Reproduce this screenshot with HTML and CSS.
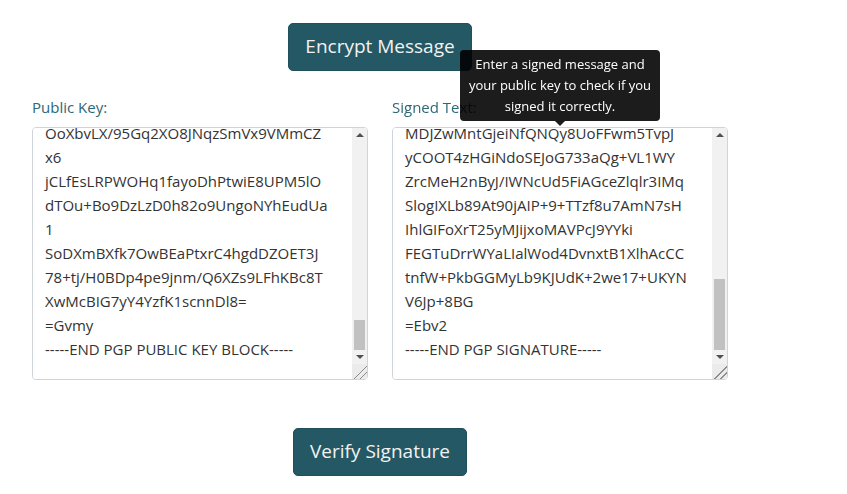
FILE: index.html
```html
<!DOCTYPE html>
<html>
<head>
<meta charset="utf-8">
<link rel="stylesheet" href="styles.css">
</head>
<body>
<div class="page">
  <div class="top-row">
    <button class="btn">Encrypt Message</button>
  </div>
  <div class="fields">
    <div class="field">
      <label class="label">Public Key:</label>
      <div class="box-wrap">
      <textarea class="box" id="pk">-----BEGIN PGP PUBLIC KEY BLOCK-----

mQINBGVq3xkBEADJrV9Lq2c0pHkT1vXn
Rb8wQ5sY3mZtK7aP1gF0xUe6hNw2dCj4
iL9oV3bT8rEyG5qA1uS7fW0nMzHk2Xp
6D4cJ+oRsLaV/91QgTjN8eBi3ZwYmKh5
Pf2UtxCv7EdWlOq0nAy4RbG1sJkM9
zHe3T6oVr8LuQwXj5NpD2aFiKc0gY7B
mS1tWx/4hRvE9lAoJ6nCdPqZ+8kUyGf
3bI5eOrT2wMsHxL0iVaN7jD9uKpQc
1YgF6zBtE4oWmR8nSlXqA2vCh/JdP5k
+Ui3TyGbLwO9eM0rZaHs7QfNxK1jVc
4pD6IuBo2nWgYlE8tRqS5mAzXhC3
kF7vJ9PwTeL1sGdHy0NqOaUr6iMbZc
2xQ+Kn4BtWfYh8lEjR3gVoDmSa5pI
uC9Zw1rTyHe0NkLq7OsXbJ4FdGi6
Mv3PaE8hUcRnW2tY5gQj+oBlKx0s
D9fZ7iTmA1pSrVeN4wLy6HbCqG3u
Xk8JoR2dPn5tEaWz0YhMsFlQc7I
gB3vUyO9rKe1NjT6xLmD4hZiSp
A5wCqH8tG0fRbJ2nXsPo7lVuMy
9eK3dYzQ+aW1iTrL6gNxBh4OcE
Fj0mUpS5vHtD8kRqZ2bIyo7CwX
n4GaL1sJeT9xMhVdP3fKr6QzOu
Wb2Y8gNcE0tHiRlA5pSmUj7kV
3qDoZ1yF+xLwT6nBeGs9aKrC4h
Mu0IjPv8dXc2QtYbR5lEoNfW7z
Hs1gA6kSpZ3wVmTy9rLeJ0DxnB
4iOcF8qUaK2tGhXjP7bMvE5lR
Yd9NoW1sC3zQ+eTgL6uBmIkx
0rHpVa8fJyD4SnE2cO7tGwXq
ZlM5bKi3Ue9AhRvP1jQnTd6s
Fx2oW8gYcL0mBtN4kE7pJuSa
qI3vHr9Z+eDlC5yX1wGfTbO6
Kn0sMa2jPiQ7dVuL4hRcE8gY
oB5tW1zNxF9kAeS3mJrG6lHv
2UdCq0XpT7yIb4sOw8LfZnMj
Rg1aE5cV+hK9tPuQ3iYeD6oB
xW7mN2lSjF0rZ4gTkA8bCnHv
dO3q1UyJ5wLpI9eXsG6tRa0M
Cf8hKzB2mVoE4nYiT7lQxPuD
gS1jW5rA0bN3kZ+eHcF9yLtO
6pMvU2dIqX8sGwJ4aRn1oETl
Bh7zK0fYcQ5mDiP3tVuS9gLx
nA2rW6jO8eHbC1kF4yZsM0qT
Uv5Il3pGd9tXwE7oR+aJhN2c
Kq0fB6mLzY4iS8gDnT1uVxWe
3rPj5CoH9lA7bMsZ2kQtE0yF
Ow6dI1vG4hUnX8cRa3JpL5mT
eK9sYq2B+tNfW0zMj7oDiV4g
Ha1lC6rP3uSxE8bQyZ5nGkT
Jd0wF2mA9vOhR4tLcI7eUsX
gN1pY6kB3qWzM8jDf5oTaHr
Cx0E2lVi9uSbG4nQt7yKeP
+Rm1hJ6dZ3wOcL8sFa5XgUv
YoT2kN0bI7qD4jMr9eHpS
Lw3fA8nGzKc1Vt6RyQm0Ue
Pb5sJ2iX9oDhT4kWg7NlCa
Ev1qM8yZ3uFrB6tHxS0jKd
9cO2wL5gAnI7pRmQe4VzYb
Tf3hU0kD8sJxGa1lN6oWrC
Mi7yB2qE5vZtK9cSgP0dXn
Hj4uR1wL8fAoY6mTeQ3sIb
OoXbvLX/95Gq2XO8JNqzSmVx9VMmCZ
x6
jCLfEsLRPWOHq1fayoDhPtwiE8UPM5lO
dTOu+Bo9DzLzD0h82o9UngoNYhEudUa
1
SoDXmBXfk7OwBEaPtxrC4hgdDZOET3J
78+tj/H0BDp4pe9jnm/Q6XZs9LFhKBc8T
XwMcBIG7yY4YzfK1scnnDl8=
=Gvmy
-----END PGP PUBLIC KEY BLOCK-----</textarea>
        <div class="sb" aria-hidden="true">
          <div class="sb-btn"><span class="arrow-up"></span></div>
          <div class="sb-track"><div class="sb-thumb" style="height: 30px"></div></div>
          <div class="sb-btn"><span class="arrow-down"></span></div>
        </div>
      </div>
    </div>
    <div class="field">
      <label class="label">Signed Text:</label>
      <div class="box-wrap">
      <textarea class="box" id="st">-----BEGIN PGP SIGNED MESSAGE-----
Hash: SHA512

Hello, this is my signed message.
-----BEGIN PGP SIGNATURE-----

iQIzBAEBCgAdFiEEq7mN2lSjF0rZ4gT
kA8bCnHvdO3q1UyJ5wLpI9eXsG6tRa0
MCf8hKzB2mVoE4nYiT7lQxPuDgS1jW5
rA0bN3kZ+eHcF9yLtO6pMvU2dIqX8sG
wJ4aRn1oETlBh7zK0fYcQ5mDiP3tVuS
9gLxnA2rW6jO8eHbC1kF4yZsM0qTUv5
Il3pGd9tXwE7oR+aJhN2cKq0fB6mLzY
4iS8gDnT1uVxWe3rPj5CoH9lA7bMsZ2
kQtE0yFOw6dI1vG4hUnX8cRa3JpL5m
Tf3hU0kD8sJxGa1lN6oWrCMi7yB2qE
5vZtK9cSgP0dXnHj4uR1wL8fAoY6mT
eQ3sIbPb5sJ2iX9oDhT4kWg7NlCaEv
1qM8yZ3uFrB6tHxS0jKd9cO2wL5gAn
MDJZwMntGjeiNfQNQy8UoFFwm5TvpJ
yCOOT4zHGiNdoSEJoG733aQg+VL1WY
ZrcMeH2nByJ/IWNcUd5FiAGceZlqlr3IMq
SlogIXLb89At90jAIP+9+TTzf8u7AmN7sH
IhlGIFoXrT25yMJijxoMAVPcJ9YYki
FEGTuDrrWYaLIalWod4DvnxtB1XlhAcCC
tnfW+PkbGGMyLb9KJUdK+2we17+UKYN
V6Jp+8BG
=Ebv2
-----END PGP SIGNATURE-----</textarea>
        <div class="sb" aria-hidden="true">
          <div class="sb-btn"><span class="arrow-up"></span></div>
          <div class="sb-track"><div class="sb-thumb" style="height: 71px"></div></div>
          <div class="sb-btn"><span class="arrow-down"></span></div>
        </div>
      </div>
      <div class="tooltip">Enter a signed message and your public key to check if you signed it correctly.</div>
    </div>
  </div>
  <div class="bottom-row">
    <button class="btn">Verify Signature</button>
  </div>
</div>
<script src="script.js"></script>
</body>
</html>
```

FILE: styles.css
```css
html, body {
  margin: 0;
  padding: 0;
  background: #ffffff;
}
body {
  font-family: "Open Sans", "Noto Sans", sans-serif;
  color: #333333;
}
.page {
  width: 696px;
  margin-left: 32px;
  padding-top: 23px;
}
.top-row, .bottom-row {
  display: flex;
  justify-content: center;
}
.bottom-row {
  margin-top: 48px;
}
.btn {
  font-family: "Open Sans", "Noto Sans", sans-serif;
  font-size: 19px;
  line-height: 29px;
  padding: 8px 16px 9px;
  color: #f2f2f2;
  background: #245864;
  border: 1px solid #20505b;
  border-radius: 5px;
}
.fields {
  display: grid;
  grid-template-columns: 336px 336px;
  column-gap: 24px;
  margin-top: 25px;
}
.field {
  position: relative;
  display: flex;
  flex-direction: column;
}
.label {
  font-size: 15px;
  line-height: 22px;
  color: #2c6876;
  margin-bottom: 9px;
}
.box-wrap {
  position: relative;
  width: 336px;
  height: 253px;
}
.box {
  display: block;
  box-sizing: border-box;
  width: 336px;
  height: 253px;
  margin: 0;
  padding: 6px 27px 18px 12px;
  font-family: "Open Sans", "Noto Sans", sans-serif;
  font-size: 15px;
  line-height: 24px;
  color: #333333;
  border: 1px solid #cfd4d9;
  border-radius: 4px;
  white-space: pre;
  overflow-x: hidden;
  overflow-y: scroll;
}
.box::-webkit-resizer {
  background-color: #ebebeb;
  background-image: linear-gradient(135deg,
    transparent 55%, #8c8c8c 55%, #8c8c8c 60%,
    transparent 60%, transparent 75%, #8c8c8c 75%, #8c8c8c 80%, transparent 80%);
}
.sb {
  position: absolute;
  top: 1px;
  right: 1px;
  width: 15px;
  height: 236px;
  display: flex;
  flex-direction: column;
  background: #f1f1f1;
  border-top-right-radius: 3px;
}
.sb-btn {
  height: 14px;
  flex: none;
  display: flex;
  align-items: center;
  justify-content: center;
}
.arrow-up {
  width: 0;
  height: 0;
  border-left: 4px solid transparent;
  border-right: 4px solid transparent;
  border-bottom: 4px solid #505050;
}
.arrow-down {
  width: 0;
  height: 0;
  border-left: 4px solid transparent;
  border-right: 4px solid transparent;
  border-top: 4px solid #505050;
}
.sb-track {
  flex: 1;
  display: flex;
  flex-direction: column;
  justify-content: flex-end;
  padding: 0 2px;
}
.sb-thumb {
  background: #c1c1c1;
}
.tooltip {
  position: absolute;
  left: 68px;
  top: -46px;
  width: 200px;
  box-sizing: border-box;
  padding: 4px 8px;
  font-size: 13px;
  line-height: 21px;
  text-align: center;
  color: #ffffff;
  background: rgba(0, 0, 0, 0.89);
  border-radius: 4px;
}
.tooltip::after {
  content: "";
  position: absolute;
  left: 50%;
  bottom: -5px;
  margin-left: -5px;
  border-left: 5px solid transparent;
  border-right: 5px solid transparent;
  border-top: 5px solid rgba(0, 0, 0, 0.89);
}
```

FILE: script.js
```js
document.querySelectorAll('.box').forEach(function (t) {
  t.scrollTop = t.scrollHeight;
});
```
